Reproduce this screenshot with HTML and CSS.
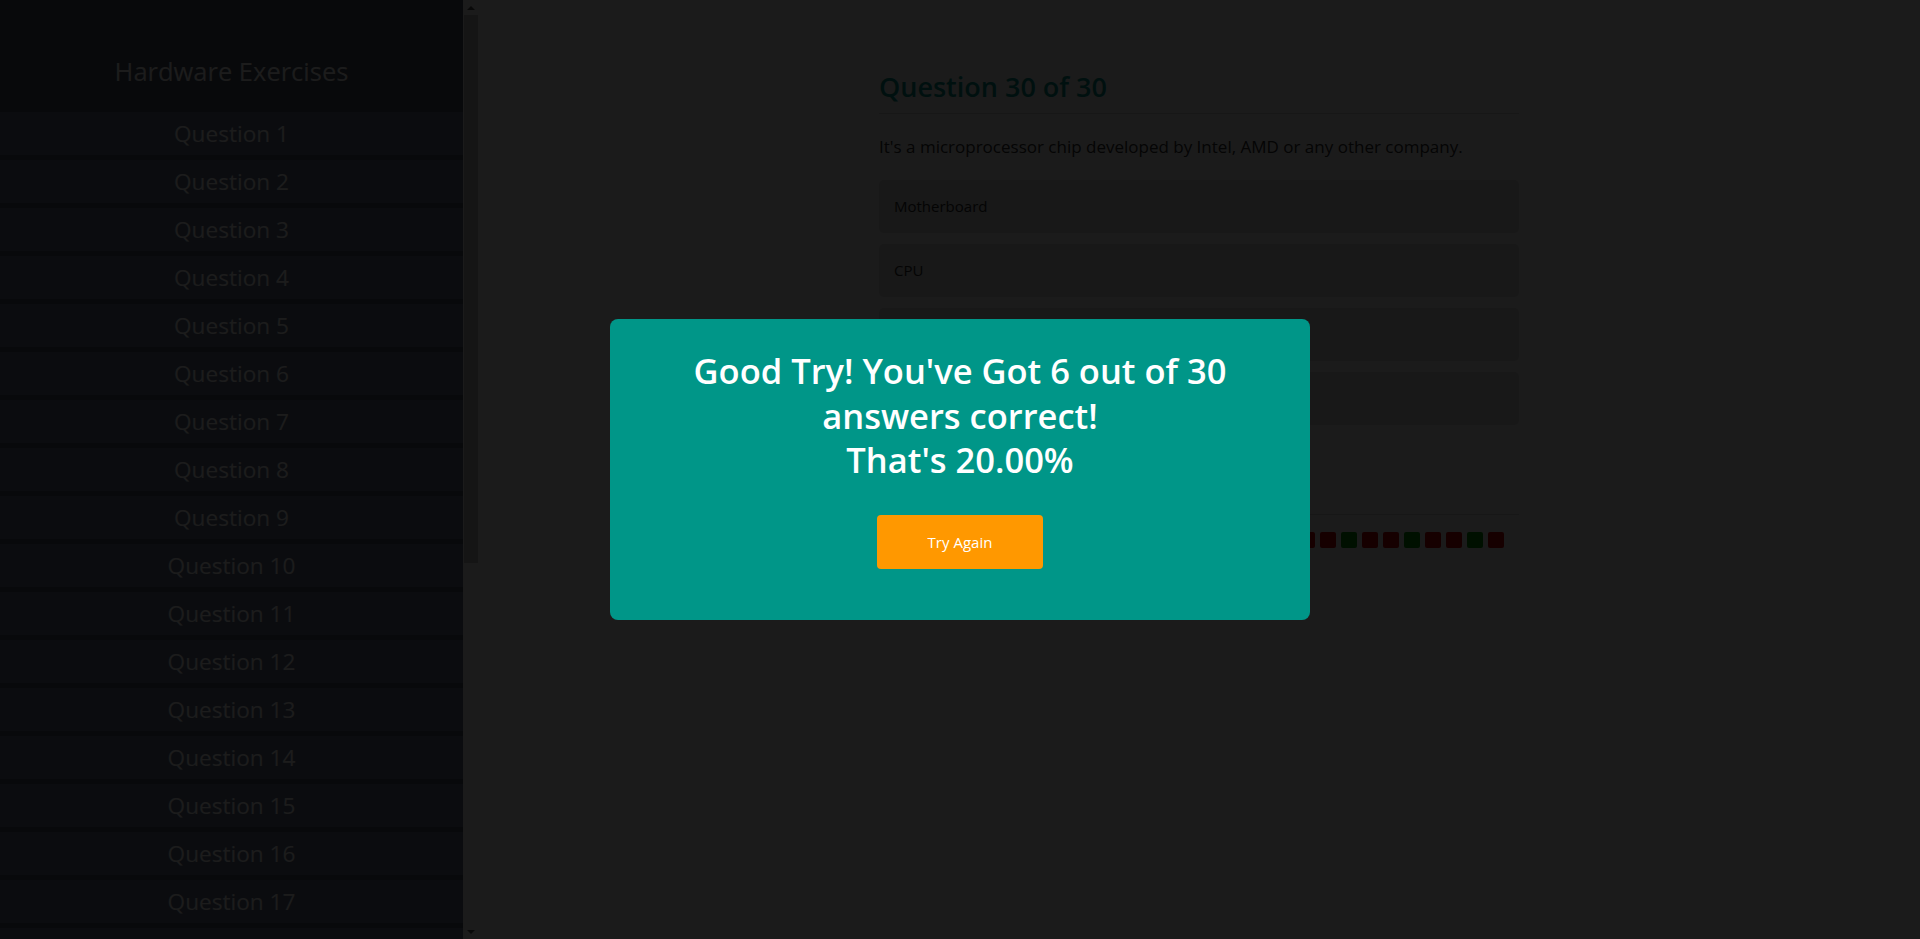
FILE: index.html
```html
<!DOCTYPE html>
<html lang="en">
<head>
<meta charset="utf-8">
<title>Hardware Exercises</title>
<link rel="stylesheet" href="styles.css">
</head>
<body>
<div class="app">
  <aside class="sidebar">
    <nav class="sidebar-nav">
      <div class="sidebar-head">Hardware Exercises</div>
      <ul class="qlist">
        <li>Question 1</li><li>Question 2</li><li>Question 3</li><li>Question 4</li><li>Question 5</li>
        <li>Question 6</li><li>Question 7</li><li>Question 8</li><li>Question 9</li><li>Question 10</li>
        <li>Question 11</li><li>Question 12</li><li>Question 13</li><li>Question 14</li><li>Question 15</li>
        <li>Question 16</li><li>Question 17</li><li>Question 18</li><li>Question 19</li><li>Question 20</li>
        <li>Question 21</li><li>Question 22</li><li>Question 23</li><li>Question 24</li><li>Question 25</li>
        <li>Question 26</li><li>Question 27</li><li>Question 28</li><li>Question 29</li><li>Question 30</li>
      </ul>
    </nav>
    <div class="scrollbar" aria-hidden="true">
      <div class="sb-btn"><span class="arrow-up"></span></div>
      <div class="sb-track"><div class="sb-thumb"></div></div>
      <div class="sb-btn"><span class="arrow-down"></span></div>
    </div>
  </aside>
  <main class="main">
    <section class="quiz">
      <h2 class="quiz-title">Question 30 of 30</h2>
      <p class="quiz-text">It's a microprocessor chip developed by Intel, AMD or any other company.</p>
      <div class="options">
        <div class="option">Motherboard</div>
        <div class="option">CPU</div>
        <div class="option">RAM</div>
        <div class="option">Hard Drive</div>
      </div>
      <div class="actions"><button class="next-btn">Submit</button></div>
      <div class="progress">
        <span class="sq bad"></span><span class="sq bad"></span><span class="sq ok"></span><span class="sq bad"></span><span class="sq bad"></span>
        <span class="sq bad"></span><span class="sq bad"></span><span class="sq ok"></span><span class="sq bad"></span><span class="sq bad"></span>
        <span class="sq bad"></span><span class="sq bad"></span><span class="sq bad"></span><span class="sq ok"></span><span class="sq bad"></span>
        <span class="sq bad"></span><span class="sq bad"></span><span class="sq bad"></span><span class="sq bad"></span><span class="sq bad"></span>
        <span class="sq bad"></span><span class="sq bad"></span><span class="sq ok"></span><span class="sq bad"></span><span class="sq bad"></span>
        <span class="sq ok"></span><span class="sq bad"></span><span class="sq bad"></span><span class="sq ok"></span><span class="sq bad"></span>
      </div>
    </section>
  </main>
</div>
<div class="overlay">
  <div class="modal">
    <h2 class="modal-title">Good Try! You've Got 6 out of 30 answers correct!<br>That's 20.00%</h2>
    <button class="modal-btn">Try Again</button>
  </div>
</div>
</body>
</html>
```

FILE: styles.css
```css
* { box-sizing: border-box; }

html, body {
  margin: 0;
  height: 100%;
}

body {
  font-family: "Open Sans", "Noto Sans", sans-serif;
  background: #f4f4f4;
  color: #333;
  overflow: hidden;
}

.app {
  display: flex;
  height: 100vh;
}

/* ---------- sidebar ---------- */
.sidebar {
  flex: 0 0 478px;
  display: flex;
  height: 100vh;
}

.sidebar-nav {
  width: 463px;
  height: 100%;
  overflow: hidden;
  background: #495264;
  color: #fff;
}

.sidebar-head {
  padding: 55px 0 25px;
  font-size: 25.5px;
  line-height: 32px;
  text-align: center;
}

.qlist {
  list-style: none;
  margin: 0;
  padding: 0;
}

.qlist li {
  height: 43px;
  margin-bottom: 5px;
  background: #63728c;
  font-size: 22.6px;
  line-height: 43px;
  text-align: center;
}

/* fake native scrollbar of the list */
.scrollbar {
  width: 15px;
  display: flex;
  flex-direction: column;
  background: #f1f1f1;
}

.sb-btn {
  height: 15px;
  flex: 0 0 15px;
  display: flex;
  align-items: center;
  justify-content: center;
}

.arrow-up,
.arrow-down {
  width: 0;
  height: 0;
  border-left: 4px solid transparent;
  border-right: 4px solid transparent;
}
.arrow-up { border-bottom: 4px solid #505050; }
.arrow-down { border-top: 4px solid #505050; }

.sb-track {
  flex: 1;
}

.sb-thumb {
  height: 548px;
  margin-left: 1px;
  background: #c1c1c1;
}

/* ---------- main ---------- */
.main {
  flex: 1;
  overflow: auto;
}

.quiz {
  width: 640px;
  margin: 0 auto;
  padding-top: 66px;
}

.quiz-title {
  margin: 0;
  padding-bottom: 6px;
  border-bottom: 1px solid #cfcfcf;
  color: #009688;
  font-size: 27px;
  font-weight: 600;
  line-height: 41px;
}

.quiz-text {
  margin: 20px 0;
  font-size: 17px;
  line-height: 26px;
  color: #2e2e2e;
}

.options {
  display: flex;
  flex-direction: column;
  gap: 11px;
}

.option {
  height: 53px;
  padding: 0 15px;
  border-radius: 5px;
  background: #d6d6d6;
  font-size: 15px;
  line-height: 53px;
  color: #2a2a2a;
}

.actions {
  padding: 22px 0 25px;
  border-bottom: 1px solid #cfcfcf;
}

.next-btn {
  height: 42px;
  padding: 0 28px;
  border: 0;
  border-radius: 4px;
  background: #009688;
  color: #fff;
  font: inherit;
}

.progress {
  display: flex;
  gap: 5px;
  padding-top: 17px;
}

.sq {
  width: 16px;
  height: 16px;
  border-radius: 2px;
}
.sq.bad { background: #c40000; }
.sq.ok { background: #008f00; }

/* ---------- result modal ---------- */
.overlay {
  position: fixed;
  inset: 0;
  background: rgba(0, 0, 0, 0.89);
  display: flex;
  align-items: center;
  justify-content: center;
}

.modal {
  width: 700px;
  padding: 30px 40px 51px;
  border-radius: 8px;
  background: #009688;
  color: #fff;
  text-align: center;
}

.modal-title {
  margin: 0 0 32px;
  font-size: 34.5px;
  font-weight: 600;
  line-height: 44.5px;
}

.modal-btn {
  width: 166px;
  height: 54px;
  border: 0;
  border-radius: 4px;
  background: #ff9800;
  color: #fff;
  font-family: inherit;
  font-size: 15px;
}
```
